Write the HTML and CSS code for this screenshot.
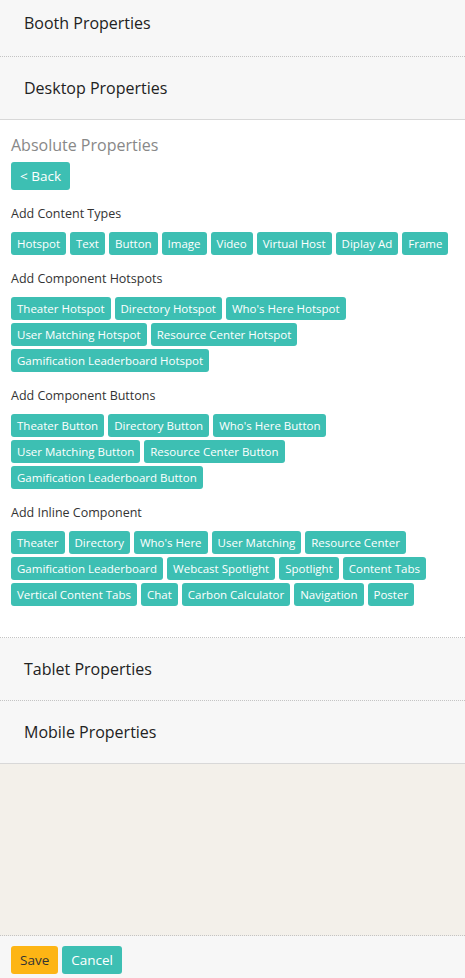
FILE: index.html
```html
<!DOCTYPE html>
<html lang="en">
<head>
    <meta charset="UTF-8">
    <meta name="viewport" content="width=device-width, initial-scale=1.0">
    <title>Booth Editor</title>
    <link rel="stylesheet" href="styles.css">
</head>
<body>
    <div class="editor">
        <!-- Collapsed panels -->
        <div class="panel-head panel-first dotted">Booth Properties</div>
        <div class="panel-head solid">Desktop Properties</div>

        <!-- Open panel -->
        <div class="panel-body">
            <h3 class="panel-title">Absolute Properties</h3>
            <button class="btn btn-teal btn-back">&lt; Back</button>

            <div class="group">
                <div class="group-label">Add Content Types</div>
                <div class="chips">
                    <button class="btn btn-teal chip">Hotspot</button>
                    <button class="btn btn-teal chip">Text</button>
                    <button class="btn btn-teal chip">Button</button>
                    <button class="btn btn-teal chip">Image</button>
                    <button class="btn btn-teal chip">Video</button>
                    <button class="btn btn-teal chip">Virtual Host</button>
                    <button class="btn btn-teal chip">Diplay Ad</button>
                    <button class="btn btn-teal chip">Frame</button>
                </div>
            </div>

            <div class="group">
                <div class="group-label">Add Component Hotspots</div>
                <div class="chips">
                    <button class="btn btn-teal chip">Theater Hotspot</button>
                    <button class="btn btn-teal chip">Directory Hotspot</button>
                    <button class="btn btn-teal chip">Who's Here Hotspot</button>
                    <button class="btn btn-teal chip">User Matching Hotspot</button>
                    <button class="btn btn-teal chip">Resource Center Hotspot</button>
                    <button class="btn btn-teal chip">Gamification Leaderboard Hotspot</button>
                </div>
            </div>

            <div class="group">
                <div class="group-label">Add Component Buttons</div>
                <div class="chips">
                    <button class="btn btn-teal chip">Theater Button</button>
                    <button class="btn btn-teal chip">Directory Button</button>
                    <button class="btn btn-teal chip">Who's Here Button</button>
                    <button class="btn btn-teal chip">User Matching Button</button>
                    <button class="btn btn-teal chip">Resource Center Button</button>
                    <button class="btn btn-teal chip">Gamification Leaderboard Button</button>
                </div>
            </div>

            <div class="group">
                <div class="group-label">Add Inline Component</div>
                <div class="chips">
                    <button class="btn btn-teal chip">Theater</button>
                    <button class="btn btn-teal chip">Directory</button>
                    <button class="btn btn-teal chip">Who's Here</button>
                    <button class="btn btn-teal chip">User Matching</button>
                    <button class="btn btn-teal chip">Resource Center</button>
                    <button class="btn btn-teal chip">Gamification Leaderboard</button>
                    <button class="btn btn-teal chip">Webcast Spotlight</button>
                    <button class="btn btn-teal chip">Spotlight</button>
                    <button class="btn btn-teal chip">Content Tabs</button>
                    <button class="btn btn-teal chip">Vertical Content Tabs</button>
                    <button class="btn btn-teal chip">Chat</button>
                    <button class="btn btn-teal chip">Carbon Calculator</button>
                    <button class="btn btn-teal chip">Navigation</button>
                    <button class="btn btn-teal chip">Poster</button>
                </div>
            </div>
        </div>

        <div class="panel-head dotted">Tablet Properties</div>
        <div class="panel-head solid">Mobile Properties</div>

        <div class="filler"></div>

        <!-- Footer actions -->
        <div class="footer">
            <button class="btn btn-save">Save</button>
            <button class="btn btn-teal btn-cancel">Cancel</button>
        </div>
    </div>
</body>
</html>
```

FILE: styles.css
```css
/* ===== Base ===== */
body {
    margin: 0;
    padding: 0;
    font-family: 'Open Sans', 'Noto Sans', sans-serif;
    color: #333;
    background: #f3f0ea;
}

.editor {
    display: flex;
    flex-direction: column;
    height: 978px;
    overflow: hidden;
}

/* ===== Panel headers ===== */
.panel-head {
    background: #f7f7f7;
    color: #222;
    font-size: 16px;
    line-height: 22px;
    padding: 20px 24px 20px 24px;
}

.panel-first {
    padding-top: 12px;
    padding-bottom: 22px;
}

.dotted {
    border-bottom: 1px dotted #c4c4c4;
}

.solid {
    border-bottom: 1px solid #d8d8d8;
}

/* ===== Open panel ===== */
.panel-body {
    background: #fff;
    padding: 14px 11px 31px 11px;
    border-bottom: 1px dotted #c4c4c4;
}

.panel-title {
    margin: 0;
    font-size: 16px;
    font-weight: normal;
    line-height: 22px;
    color: #888;
}

.group {
    margin-top: 15px;
}

.group-label {
    font-size: 12.5px;
    line-height: 18px;
    color: #333;
    margin-bottom: 9px;
}

.chips {
    display: flex;
    flex-wrap: wrap;
    gap: 3px 4px;
}

/* ===== Buttons ===== */
.btn {
    font-family: 'Open Sans', 'Noto Sans', sans-serif;
    border: none;
    border-radius: 3px;
    cursor: pointer;
    margin: 0;
}

.btn-teal {
    background: #3dbfb3;
    color: #fff;
}

.btn-teal:hover {
    background: #33a99e;
}

.chip {
    height: 23px;
    padding: 0 6px;
    font-size: 11.5px;
    line-height: 23px;
}

.btn-back {
    display: block;
    margin-top: 6px;
    height: 28px;
    padding: 0 9px;
    font-size: 13.5px;
}

/* ===== Bottom ===== */
.filler {
    flex: 1;
    background: #f3f0ea;
    border-bottom: 1px dotted #c4c4c4;
}

.footer {
    background: #f7f7f7;
    padding: 10px 11px 4px 11px;
    display: flex;
    gap: 4px;
}

.btn-save,
.btn-cancel {
    height: 28px;
    padding: 0 9px;
    font-size: 13.5px;
}

.btn-save {
    background: #fdb515;
    color: #333;
}
```
